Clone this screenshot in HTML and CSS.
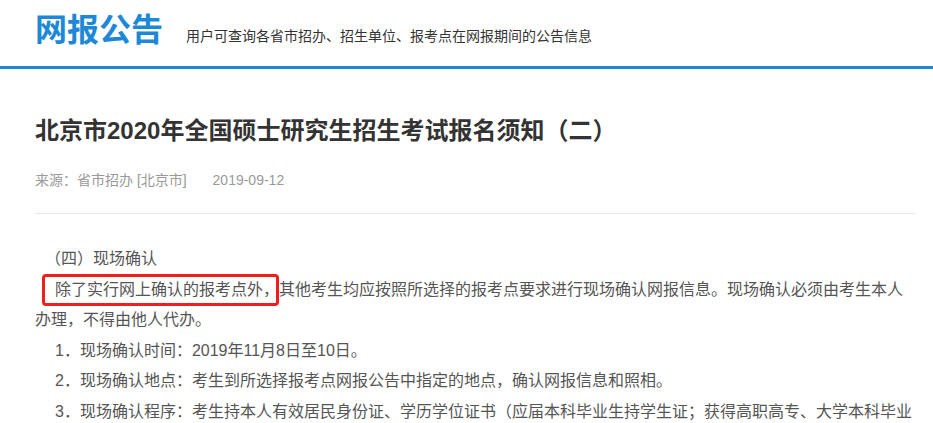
FILE: index.html
```html
<!DOCTYPE html>
<html lang="zh-CN">
<head>
    <meta charset="UTF-8">
    <meta name="viewport" content="width=device-width, initial-scale=1.0">
    <title>网报公告</title>
    <link rel="stylesheet" href="styles.css">
</head>
<body>
    <div class="header">
        <h1 class="header-title">网报公告</h1>
        <span class="header-desc">用户可查询各省市招办、招生单位、报考点在网报期间的公告信息</span>
    </div>

    <div class="article">
        <h2 class="article-title">北京市2020年全国硕士研究生招生考试报名须知（二）</h2>
        <div class="article-meta">
            <span>来源：省市招办 [北京市]</span>
            <span class="meta-date">2019-09-12</span>
        </div>

        <div class="article-body">
            <p class="section-head">（四）现场确认</p>
            <p class="indent"><span class="mark">除了实行网上确认的报考点外，</span>其他考生均应按照所选择的报考点要求进行现场确认网报信息。现场确认必须由考生本人办理，不得由他人代办。</p>
            <p class="indent">1．现场确认时间：2019年11月8日至10日。</p>
            <p class="indent">2．现场确认地点：考生到所选择报考点网报公告中指定的地点，确认网报信息和照相。</p>
            <p class="indent">3．现场确认程序：考生持本人有效居民身份证、学历学位证书（应届本科毕业生持学生证；获得高职高专、大学本科毕业生</p>
        </div>
    </div>
</body>
</html>
```

FILE: styles.css
```css
body {
    margin: 0;
    font-family: "Liberation Sans", "Noto Sans CJK SC", sans-serif;
    background: #fff;
    overflow: hidden;
}

.header {
    display: flex;
    align-items: baseline;
    height: 69px;
    box-sizing: border-box;
    padding: 10px 0 0 35px;
    border-bottom: 3px solid #1e88d8;
}

.header-title {
    margin: 0;
    font-size: 32px;
    line-height: 40px;
    font-weight: bold;
    color: #1e88d8;
}

.header-desc {
    margin-left: 23px;
    font-size: 14px;
    color: #333;
}

.article {
    padding: 0 18px 0 35px;
}

.article-title {
    margin: 44px 0 0;
    font-size: 24px;
    line-height: 36px;
    font-weight: bold;
    color: #333;
}

.article-meta {
    margin-top: 21px;
    font-size: 14px;
    line-height: 20px;
    color: #999;
    padding-bottom: 23px;
    border-bottom: 1px solid #e6e6e6;
}

.meta-date {
    margin-left: 22px;
}

.article-body {
    padding-top: 30px;
    font-size: 16px;
    line-height: 30.5px;
    color: #555;
}

.article-body p {
    margin: 0;
}

.section-head {
    padding-left: 10px;
}

.indent {
    text-indent: 20px;
}

.mark {
    position: relative;
    display: inline-block;
    text-indent: 0;
}

/* 红框标注 */
.mark::after {
    content: "";
    position: absolute;
    left: -13px;
    right: 0;
    top: -1px;
    bottom: -1px;
    border: 3px solid #f01e1e;
    border-radius: 4px;
}
```
